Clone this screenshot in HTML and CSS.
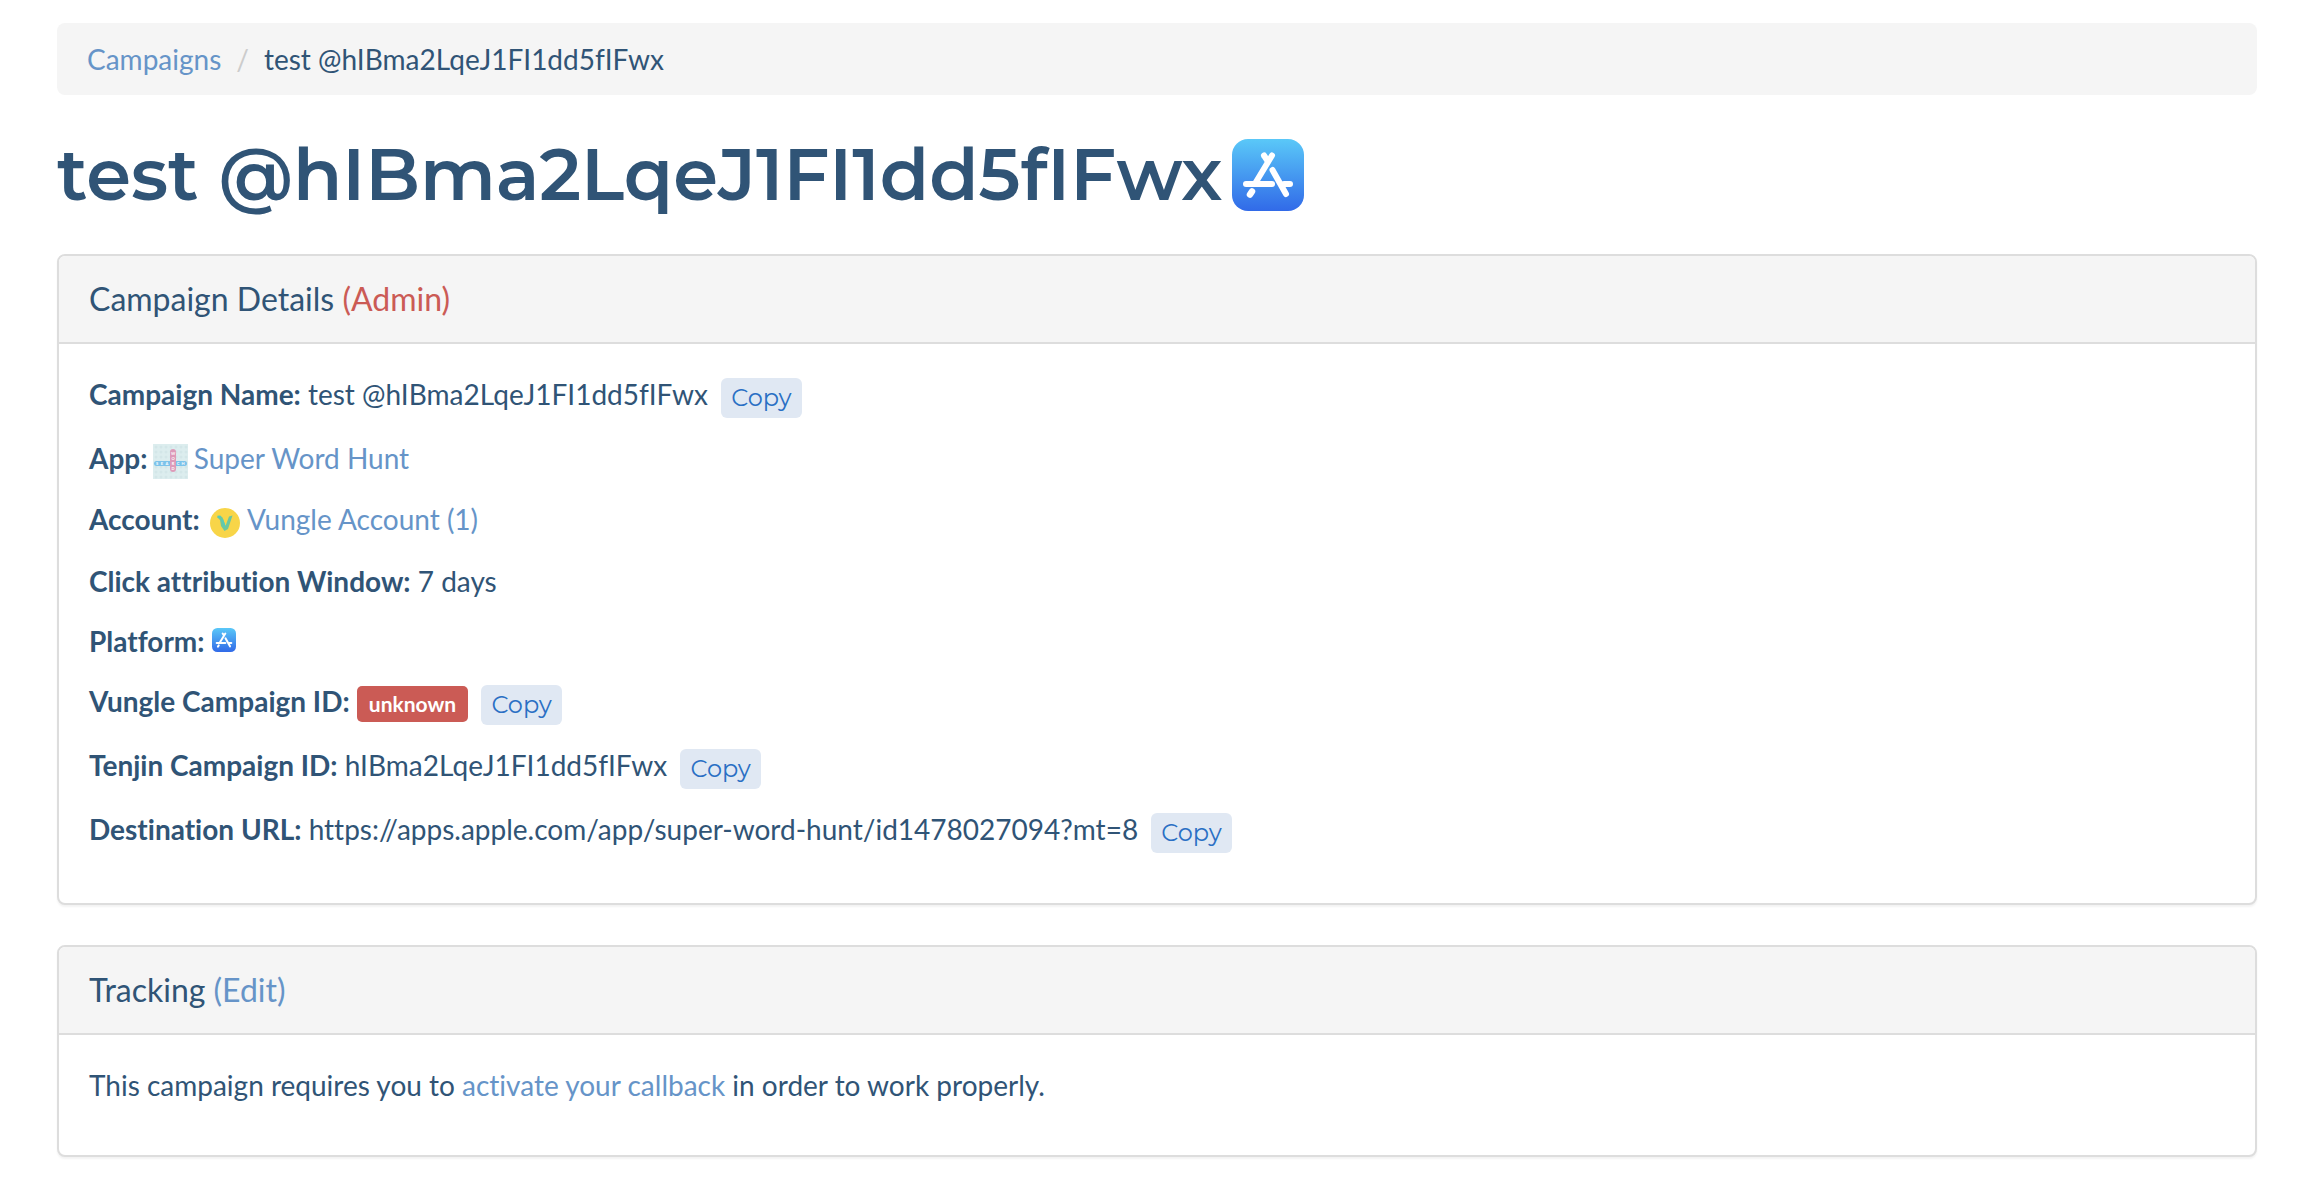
FILE: index.html
```
<!DOCTYPE html>
<html lang="en">
<head>
    <meta charset="UTF-8">
    <meta name="viewport" content="width=device-width, initial-scale=1.0">
    <title>Campaign</title>
    <link rel="stylesheet" href="styles.css">
</head>
<body>
    <!-- shared app store icon -->
    <svg class="defs" aria-hidden="true">
        <defs>
            <linearGradient id="storeBg" x1="0" y1="0" x2="0" y2="1">
                <stop offset="0" stop-color="#5ac8f8"/>
                <stop offset="1" stop-color="#316ae8"/>
            </linearGradient>
        </defs>
        <symbol id="appStore" viewBox="0 0 72 72">
            <rect width="72" height="72" rx="16" fill="url(#storeBg)"/>
            <g fill="none" stroke="#fff" stroke-width="6" stroke-linecap="round">
                <path d="M14 45H40"/>
                <path d="M52 45H58"/>
                <path d="M40 16.500L24 43"/>
                <path d="M32 16.500L35 21"/>
                <path d="M40.500 31L54 55"/>
                <path d="M20 52.500L18 55.500" stroke-width="6.500"/>
            </g>
        </symbol>
    </svg>

    <div class="container">
        <nav>
            <ol class="breadcrumb">
                <li><a href="#">Campaigns</a></li>
                <li>test @hIBma2LqeJ1FI1dd5fIFwx</li>
            </ol>
        </nav>

        <h1>test @hIBma2LqeJ1FI1dd5fIFwx <svg class="store-icon"><use href="#appStore"/></svg></h1>

        <div class="panel">
            <div class="panel-heading">
                <h2 class="panel-title">Campaign Details <span class="text-danger">(Admin)</span></h2>
            </div>
            <div class="panel-body">
                <p><strong>Campaign Name:</strong> test @hIBma2LqeJ1FI1dd5fIFwx <button type="button" class="btn-copy">Copy</button></p>
                <p>
                    <strong>App:</strong>
                    <svg class="app-icon" viewBox="0 0 35 35">
                        <defs>
                            <pattern id="dots" width="5" height="5" patternUnits="userSpaceOnUse">
                                <circle cx="3" cy="3" r="1.500" fill="#d3e6e8"/>
                            </pattern>
                        </defs>
                        <rect width="35" height="35" fill="#dcedee"/>
                        <rect width="35" height="35" fill="url(#dots)"/>
                        <rect x="1" y="17" width="33" height="5" rx="2.500" fill="#7cc3ea"/>
                        <rect x="17" y="5" width="6" height="23" rx="3" fill="#dd9bb9"/>
                        <g class="tile-text">
                            <text x="4" y="21">S</text>
                            <text x="9" y="21">E</text>
                            <text x="14" y="21">A</text>
                            <text x="20" y="21">R</text>
                            <text x="25" y="21">C</text>
                            <text x="30" y="21">H</text>
                            <text x="20" y="11">W</text>
                            <text x="20" y="16">O</text>
                            <text x="20" y="26">D</text>
                        </g>
                    </svg>
                    <a href="#">Super Word Hunt</a>
                </p>
                <p>
                    <strong>Account:</strong>
                    <svg class="account-icon" viewBox="0 0 36 36">
                        <circle cx="18" cy="18" r="15" fill="#f8d548"/>
                        <path d="M10 12L13 10.500L15.500 12.500L18.500 21L22 11.500L25.500 10.500L21 24L17.500 26L14 21L13 15Z" fill="#6fc79b"/>
                        <path d="M10.500 11.500L14 12M15 14L18 22" fill="none" stroke="#58cbb8" stroke-width="2"/>
                    </svg>
                    <a href="#">Vungle Account (1)</a>
                </p>
                <p><strong>Click attribution Window:</strong> 7 days</p>
                <p><strong>Platform:</strong> <svg class="platform-icon"><use href="#appStore"/></svg></p>
                <p><strong>Vungle Campaign ID:</strong> <span class="label-danger">unknown</span> <button type="button" class="btn-copy">Copy</button></p>
                <p><strong>Tenjin Campaign ID:</strong> hIBma2LqeJ1FI1dd5fIFwx <button type="button" class="btn-copy">Copy</button></p>
                <p><strong>Destination URL:</strong> https://apps.apple.com/app/super-word-hunt/id1478027094?mt=8 <button type="button" class="btn-copy">Copy</button></p>
            </div>
        </div>

        <div class="panel">
            <div class="panel-heading">
                <h2 class="panel-title">Tracking <a href="#">(Edit)</a></h2>
            </div>
            <div class="panel-body">
                <p>This campaign requires you to <a href="#">activate your callback</a> in order to work properly.</p>
            </div>
        </div>
    </div>
</body>
</html>
```
FILE: styles.css
```
* {
    box-sizing: border-box;
}
body {
    margin: 0;
    background: #fff;
    color: #305476;
    font-family: Lato, "Liberation Sans", sans-serif;
    font-size: 28px;
    font-variant-ligatures: none;
    line-height: 40px;
}
a {
    color: #6694c8;
    text-decoration: none;
}
a:hover {
    text-decoration: underline;
}
.defs {
    display: block;
    width: 0;
    height: 0;
}
.container {
    padding: 23px 44px 24px 57px;
}
.breadcrumb {
    display: flex;
    margin: 0 0 40px;
    padding: 16px 30px;
    list-style: none;
    background: #f5f5f5;
    border-radius: 8px;
}
.breadcrumb li + li::before {
    content: "/";
    padding: 0 15px;
    color: #ccc;
}
h1 {
    margin: 0 0 40px;
    font-family: Montserrat, Inter, sans-serif;
    font-size: 72px;
    font-weight: 600;
    line-height: 79px;
}
.store-icon {
    width: 72px;
    height: 72px;
    margin-left: -10px;
    vertical-align: -11px;
}
.panel {
    margin-bottom: 40px;
    border: 2px solid #ddd;
    border-radius: 8px;
    background: #fff;
    box-shadow: 0 2px 2px rgba(0, 0, 0, 0.05);
}
.panel-heading {
    padding: 24px 30px;
    background: #f5f5f5;
    border-bottom: 2px solid #ddd;
    border-radius: 6px 6px 0 0;
}
.panel-title {
    margin: 0;
    font-size: 32px;
    font-weight: 400;
    line-height: 38px;
}
.text-danger {
    color: #cb5b55;
}
.panel-body {
    padding: 30px;
}
.panel-body p {
    margin: 0 0 20px;
}
.btn-copy {
    margin: 0 0 0 6px;
    padding: 0 10px;
    border: none;
    border-radius: 6px;
    background: #e0e8f3;
    color: #2a6fc4;
    font-family: Montserrat, Inter, sans-serif;
    font-size: 24px;
    line-height: 40px;
    vertical-align: -1px;
    cursor: pointer;
}
.label-danger {
    display: inline-block;
    padding: 0 12px;
    border-radius: 5px;
    background: #cb5b55;
    color: #fff;
    font-size: 21px;
    font-weight: 700;
    line-height: 36px;
}
.app-icon {
    width: 35px;
    height: 35px;
    margin: 0 -1px 0 -2px;
    vertical-align: -10px;
}
.tile-text {
    fill: #fff;
    font-size: 4px;
    font-weight: 700;
    text-anchor: middle;
}
.account-icon {
    width: 36px;
    height: 36px;
    margin-right: -2px;
    vertical-align: -11px;
}
.platform-icon {
    width: 24px;
    height: 24px;
    vertical-align: baseline;
}
```
